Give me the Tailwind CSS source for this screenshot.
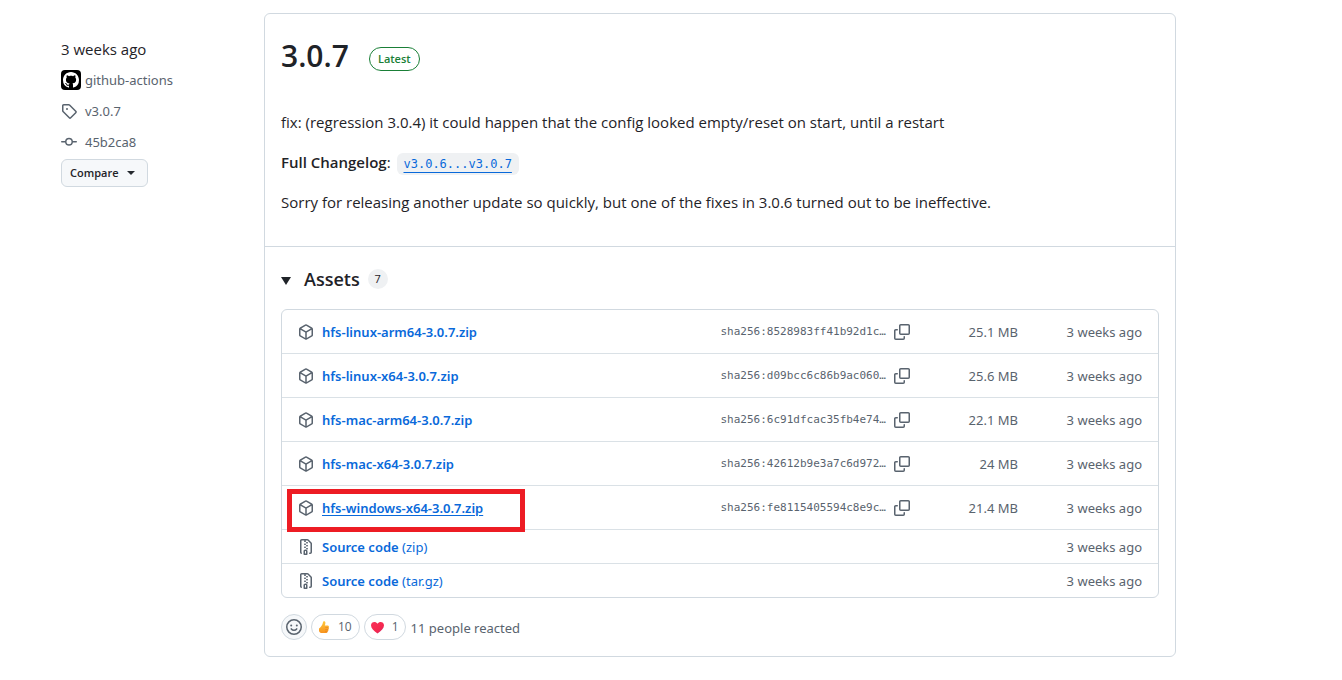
<!DOCTYPE html>
<html lang="en">
<head>
    <meta charset="UTF-8">
    <meta name="viewport" content="width=device-width, initial-scale=1.0">
    <title>Release 3.0.7</title>
    <script src="https://cdn.jsdelivr.net/npm/@tailwindcss/browser@4"></script>
</head>
<body class="bg-white text-[#1f2328] font-['Open_Sans','Noto_Sans',sans-serif] text-[15px] leading-6">
    <!-- Shared icons -->
    <svg class="hidden">
        <symbol id="icon-package" viewBox="0 0 16 16"><path d="m8.878.392 5.25 3.045c.54.314.872.89.872 1.514v6.098a1.75 1.75 0 0 1-.872 1.514l-5.25 3.045a1.75 1.75 0 0 1-1.756 0l-5.25-3.045A1.75 1.75 0 0 1 1 11.049V4.951c0-.624.332-1.201.872-1.514L7.122.392a1.75 1.75 0 0 1 1.756 0ZM7.875 1.69l-4.63 2.685L8 7.133l4.755-2.758-4.63-2.685a.248.248 0 0 0-.25 0ZM2.5 5.677v5.372c0 .09.047.171.125.216l4.625 2.683V8.432Zm6.25 8.271 4.625-2.683a.25.25 0 0 0 .125-.216V5.677L8.75 8.432Z"/></symbol>
        <symbol id="icon-zip" viewBox="0 0 16 16"><path d="M3.5 1.75v11.5c0 .09.048.173.126.217a.75.75 0 0 1-.752 1.298A1.748 1.748 0 0 1 2 13.25V1.75C2 .784 2.784 0 3.75 0h5.586c.464 0 .909.185 1.237.513l2.914 2.914c.329.328.513.773.513 1.237v8.586A1.75 1.75 0 0 1 12.25 15h-.5a.75.75 0 0 1 0-1.5h.5a.25.25 0 0 0 .25-.25V4.664a.25.25 0 0 0-.073-.177L9.513 1.573a.25.25 0 0 0-.177-.073H7.25a.75.75 0 0 1 0 1.5h-.5a.75.75 0 0 1 0-1.5h-3a.25.25 0 0 0-.25.25Z"/><path fill-rule="evenodd" d="M7.25 10.5h.5c.966 0 1.75.784 1.75 1.75v3a.75.75 0 0 1-.75.75h-2.5a.75.75 0 0 1-.75-.75v-3c0-.966.784-1.75 1.75-1.75ZM7 12.25v2.25h1v-2.25a.25.25 0 0 0-.25-.25h-.5a.25.25 0 0 0-.25.25Z"/><path d="M6 5.25a.75.75 0 0 1 .75-.75h.5a.75.75 0 0 1 0 1.5h-.5A.75.75 0 0 1 6 5.25Zm.75 2.25h.5a.75.75 0 0 1 0 1.5h-.5a.75.75 0 0 1 0-1.5ZM8 6.75A.75.75 0 0 1 8.75 6h.5a.75.75 0 0 1 0 1.5h-.5A.75.75 0 0 1 8 6.75Zm.75-3.75h.5a.75.75 0 0 1 0 1.5h-.5a.75.75 0 0 1 0-1.5ZM8 9.75A.75.75 0 0 1 8.75 9h.5a.75.75 0 0 1 0 1.5h-.5A.75.75 0 0 1 8 9.75Z"/></symbol>
        <symbol id="icon-copy" viewBox="0 0 16 16"><path d="M0 6.75C0 5.784.784 5 1.75 5h1.5a.75.75 0 0 1 0 1.5h-1.5a.25.25 0 0 0-.25.25v7.5c0 .138.112.25.25.25h7.5a.25.25 0 0 0 .25-.25v-1.5a.75.75 0 0 1 1.5 0v1.5A1.75 1.75 0 0 1 9.25 16h-7.5A1.75 1.75 0 0 1 0 14.25Z"/><path d="M5 1.75C5 .784 5.784 0 6.75 0h7.5C15.216 0 16 .784 16 1.75v7.5A1.75 1.75 0 0 1 14.25 11h-7.5A1.75 1.75 0 0 1 5 9.25Zm1.75-.25a.25.25 0 0 0-.25.25v7.5c0 .138.112.25.25.25h7.5a.25.25 0 0 0 .25-.25v-7.5a.25.25 0 0 0-.25-.25Z"/></symbol>
    </svg>

    <main class="flex pt-[13px] pl-[61px] pr-[166px] pb-6">
        <aside class="w-[203px] shrink-0 pt-6">
            <div>3 weeks ago</div>
            <div class="mt-[7px] flex flex-col gap-[7px] font-['Noto_Sans',sans-serif] text-[13px] text-[#59636e]">
                <a href="#" class="flex items-center gap-1">
                    <svg class="size-5 rounded-sm bg-black" viewBox="-2 -2 20 20" fill="#fff"><path d="M8 0c4.42 0 8 3.58 8 8a8.013 8.013 0 0 1-5.45 7.59c-.4.08-.55-.17-.55-.38 0-.27.01-1.13.01-2.2 0-.75-.25-1.23-.54-1.48 1.78-.2 3.65-.88 3.65-3.95 0-.88-.31-1.59-.82-2.15.08-.2.36-1.02-.08-2.12 0 0-.67-.22-2.2.82-.64-.18-1.32-.27-2-.27-.68 0-1.36.09-2 .27-1.53-1.03-2.2-.82-2.2-.82-.44 1.1-.16 1.92-.08 2.12-.51.56-.82 1.28-.82 2.15 0 3.06 1.86 3.75 3.64 3.95-.23.2-.44.55-.51 1.07-.46.21-1.61.55-2.33-.66-.15-.24-.6-.83-1.23-.82-.67.01-.27.38.01.53.34.19.73.9.82 1.13.16.45.68 1.31 2.69.94 0 .67.01 1.3.01 1.49 0 .21-.15.45-.55.38A7.995 7.995 0 0 1 0 8c0-4.42 3.58-8 8-8Z"/></svg>
                    github-actions
                </a>
                <a href="#" class="flex items-center gap-2">
                    <svg class="size-4" viewBox="0 0 16 16" fill="currentColor"><path d="M1 7.775V2.75C1 1.784 1.784 1 2.75 1h5.025c.464 0 .91.184 1.238.513l6.25 6.25a1.75 1.75 0 0 1 0 2.474l-5.026 5.026a1.75 1.75 0 0 1-2.474 0l-6.25-6.25A1.752 1.752 0 0 1 1 7.775Zm1.5 0c0 .066.026.13.073.177l6.25 6.25a.25.25 0 0 0 .354 0l5.025-5.025a.25.25 0 0 0 0-.354l-6.25-6.25a.25.25 0 0 0-.177-.073H2.75a.25.25 0 0 0-.25.25ZM6 5a1 1 0 1 1 0 2 1 1 0 0 1 0-2Z"/></svg>
                    v3.0.7
                </a>
                <a href="#" class="flex items-center gap-2">
                    <svg class="size-4" viewBox="0 0 16 16" fill="currentColor"><path d="M11.93 8.5a4.002 4.002 0 0 1-7.86 0H.75a.75.75 0 0 1 0-1.5h3.32a4.002 4.002 0 0 1 7.86 0h3.32a.75.75 0 0 1 0 1.5Zm-1.43-.75a2.5 2.5 0 1 0-5 0 2.5 2.5 0 0 0 5 0Z"/></svg>
                    45b2ca8
                </a>
            </div>
            <button class="mt-[5px] flex h-7 items-center gap-2 rounded-md border border-[#d1d9e0] bg-[#f6f8fa] pl-2 pr-3 text-[11px] font-semibold">
                Compare
                <span class="border-x-4 border-t-4 border-x-transparent border-t-[#25292e]"></span>
            </button>
        </aside>

        <article class="min-w-0 flex-1 rounded-md border border-[#d1d9e0]">
            <section class="px-4 pt-[21px] pb-8">
                <div class="flex items-center gap-5">
                    <h1 class="text-[30px] leading-[42px] font-semibold">3.0.7</h1>
                    <span class="mt-1.5 flex h-6 items-center rounded-full border border-[#1a7f37] px-2 text-[11px] font-semibold text-[#1a7f37]">Latest</span>
                </div>
                <div class="mt-[33px] flex flex-col gap-4">
                    <p>fix: (regression 3.0.4) it could happen that the config looked empty/reset on start, until a restart</p>
                    <p><strong class="font-semibold">Full Changelog</strong>: <a href="#" class="ml-0.5 rounded-md bg-[#eff1f3] px-[7px] py-1 font-['DejaVu_Sans_Mono',monospace] text-[12px] leading-4 text-[#0969da] underline underline-offset-4">v3.0.6...v3.0.7</a></p>
                    <p>Sorry for releasing another update so quickly, but one of the fixes in 3.0.6 turned out to be ineffective.</p>
                </div>
            </section>

            <section class="border-t border-[#d1d9e0] px-4 pt-4 pb-4">
                <details open>
                    <summary class="flex h-8 cursor-pointer items-center">
                        <span class="mt-1 border-x-[5px] border-t-8 border-x-transparent border-t-[#1f2328]"></span>
                        <span class="ml-[13px] text-[18px] font-semibold">Assets</span>
                        <span class="ml-2 flex size-5 items-center justify-center rounded-full bg-[#eff1f3] text-[11px] font-medium">7</span>
                    </summary>
                    <ul id="assetList" class="mt-[14px] rounded-md border border-[#d1d9e0] font-['Noto_Sans',sans-serif] text-[13px] text-[#59636e]">
                        <!-- Asset rows are added by the script below -->
                    </ul>
                </details>

                <div class="mt-4 flex items-center gap-1 text-[#59636e]">
                    <button aria-label="Add a reaction" class="flex size-[26px] items-center justify-center rounded-full border border-[#d1d9e0] bg-[#f6f8fa]">
                        <svg class="size-4" viewBox="0 0 16 16" fill="none" stroke="currentColor" stroke-width="1.5" stroke-linecap="round"><circle cx="8" cy="8" r="7.25"/><path d="M5.3 9.9c1.4 1.7 4 1.7 5.4 0"/><circle cx="5.2" cy="6.5" r="1" fill="currentColor" stroke="none"/><circle cx="10.8" cy="6.5" r="1" fill="currentColor" stroke="none"/></svg>
                    </button>
                    <button class="flex h-[26px] items-center gap-2 rounded-full border border-[#d1d9e0] pl-[6px] pr-[7px] text-[12px]">
                        <svg class="size-3" viewBox="0 0 12 12">
                            <defs><linearGradient id="thumbFill" x1="0" y1="0" x2="0" y2="1"><stop offset="0" stop-color="#ffc83d"/><stop offset="1" stop-color="#f7931e"/></linearGradient></defs>
                            <path fill="url(#thumbFill)" d="M1 7.4C2.6 6.4 4.6 4.2 5 1.2 5.1-.2 7.2-.2 7.4 1.4 7.5 2.6 7.2 3.6 6.8 4.6H9.4C11 4.6 11.2 6 10.6 6.6 11.1 7.4 10.9 8.2 10.3 8.6 10.6 9.4 10.2 10.1 9.6 10.4 9.6 11.5 8.8 12 7.5 12H4.4C2 12 1 10.8 1 9.4Z"/>
                            <path stroke="#e57a1c" stroke-width=".6" fill="none" d="M7.3 6.6h3.1M7.2 8.6h3M7 10.4h2.5"/>
                        </svg>
                        <span>10</span>
                    </button>
                    <button class="flex h-[26px] items-center gap-2 rounded-full border border-[#d1d9e0] px-[6px] text-[12px]">
                        <svg class="size-[13px]" viewBox="0 0 12 12">
                            <defs><linearGradient id="heartFill" x1="0" y1="0" x2="1" y2="1"><stop offset="0" stop-color="#f8315a"/><stop offset=".6" stop-color="#f5284e"/><stop offset="1" stop-color="#c9266f"/></linearGradient></defs>
                            <path fill="url(#heartFill)" d="M6 11.5C2.5 9.3 0 6.9 0 4 0 .8 4.2-.1 6 2.5 7.8-.1 12 .8 12 4 12 6.9 9.5 9.3 6 11.5Z"/>
                        </svg>
                        <span>1</span>
                    </button>
                    <span class="pt-0.5 pl-px font-['Noto_Sans',sans-serif] text-[13px]">11 people reacted</span>
                </div>
            </section>
        </article>
    </main>

    <script>
        const assets = [
            { name: 'hfs-linux-arm64-3.0.7.zip', sha: 'sha256:8528983ff41b92d1c…', size: '25.1 MB' },
            { name: 'hfs-linux-x64-3.0.7.zip', sha: 'sha256:d09bcc6c86b9ac060…', size: '25.6 MB' },
            { name: 'hfs-mac-arm64-3.0.7.zip', sha: 'sha256:6c91dfcac35fb4e74…', size: '22.1 MB' },
            { name: 'hfs-mac-x64-3.0.7.zip', sha: 'sha256:42612b9e3a7c6d972…', size: '24 MB' },
            { name: 'hfs-windows-x64-3.0.7.zip', sha: 'sha256:fe8115405594c8e9c…', size: '21.4 MB', marked: true },
            { name: 'Source code', format: '(zip)' },
            { name: 'Source code', format: '(tar.gz)' }
        ];
        const assetList = document.getElementById('assetList');

        assets.forEach((asset, index) => {
            const row = document.createElement('li');
            row.className = 'relative flex items-center px-4';
            if (index < assets.length - 1) {
                row.classList.add(asset.format ? 'h-[34px]' : 'h-11', 'border-b', 'border-[#d1d9e0]/80');
            } else {
                row.classList.add('h-[33px]');
            }
            row.innerHTML = `
                <svg class="size-4 shrink-0" fill="currentColor"><use href="#${asset.format ? 'icon-zip' : 'icon-package'}"/></svg>
                <a href="#" class="ml-2 flex-1 text-[#0969da] ${asset.marked ? 'underline underline-offset-2' : ''}"><span class="font-semibold">${asset.name}</span> ${asset.format || ''}</a>
                ${asset.sha ? `
                <span class="font-['DejaVu_Sans_Mono',monospace] text-[11px]">${asset.sha}</span>
                <button aria-label="Copy digest" class="ml-2"><svg class="size-4" fill="currentColor"><use href="#icon-copy"/></svg></button>
                <span class="w-[108px] text-right">${asset.size}</span>` : ''}
                <span class="w-[124px] text-right">3 weeks ago</span>
                ${asset.marked ? '<div class="pointer-events-none absolute top-[3px] left-[5px] h-[43px] w-[238px] border-5 border-[#ed1c24]"></div>' : ''}
            `;
            assetList.appendChild(row);
        });
    </script>
</body>
</html>
